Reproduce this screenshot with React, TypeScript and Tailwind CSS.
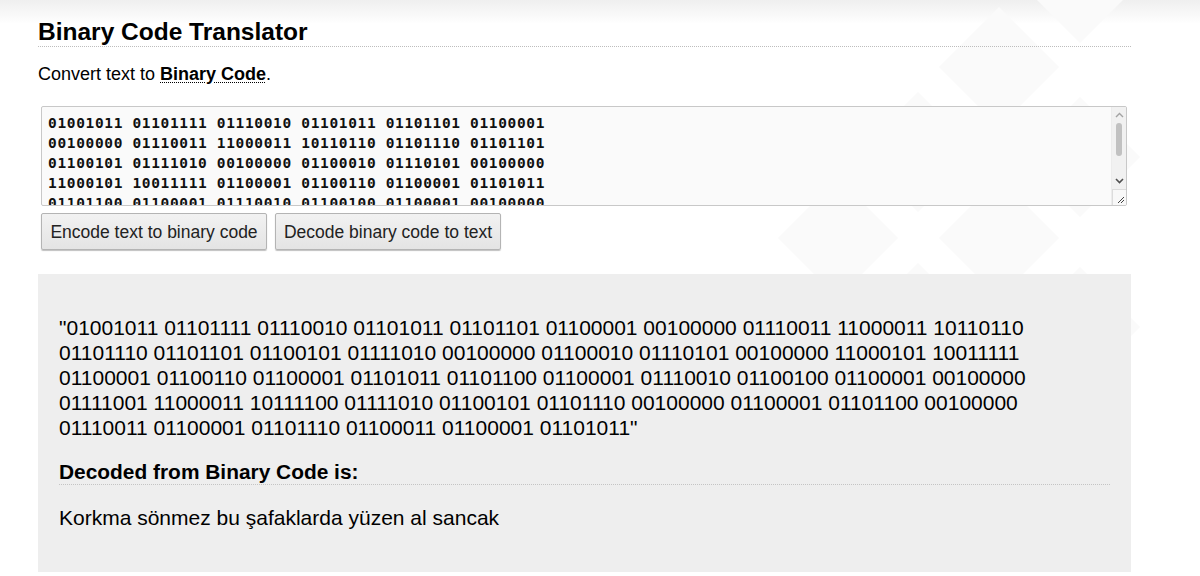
import React from "react";

const taLines = [
  "01001011 01101111 01110010 01101011 01101101 01100001",
  "00100000 01110011 11000011 10110110 01101110 01101101",
  "01100101 01111010 00100000 01100010 01110101 00100000",
  "11000101 10011111 01100001 01100110 01100001 01101011",
  "01101100 01100001 01110010 01100100 01100001 00100000",
];

const outLines = [
  "\"01001011 01101111 01110010 01101011 01101101 01100001 00100000 01110011 11000011 10110110",
  "01101110 01101101 01100101 01111010 00100000 01100010 01110101 00100000 11000101 10011111",
  "01100001 01100110 01100001 01101011 01101100 01100001 01110010 01100100 01100001 00100000",
  "01111001 11000011 10111100 01111010 01100101 01101110 00100000 01100001 01101100 00100000",
  "01110011 01100001 01101110 01100011 01100001 01101011\"",
];

const diamonds: [number, number][] = [
  [1080, -17],
  [999, 67],
  [918, 152],
  [1080, 157],
  [838, 238],
  [999, 238],
  [918, 323],
  [1080, 327],
];

function Background() {
  return (
    <svg
      className="pointer-events-none absolute left-0 top-0"
      width="1200"
      height="576"
      viewBox="0 0 1200 576"
    >
      {diamonds.map(([cx, cy], i) => (
        <polygon
          key={i}
          points={`${cx},${cy - 60} ${cx + 60},${cy} ${cx},${cy + 60} ${cx - 60},${cy}`}
          fill="#fafafa"
        />
      ))}
    </svg>
  );
}

function Scrollbar() {
  return (
    <div className="flex w-[15px] shrink-0 flex-col border-l border-[#ececec] bg-[#f1f1f1]">
      <div className="flex h-[16px] items-center justify-center">
        <svg width="9" height="6" viewBox="0 0 9 6">
          <path d="M1 5 L4.5 1.5 L8 5" stroke="#a3a3a3" strokeWidth="1.4" fill="none" />
        </svg>
      </div>
      <div className="flex justify-center">
        <div className="h-[33px] w-[6px] rounded-[3px] bg-[#c1c1c1]" />
      </div>
      <div className="flex-1" />
      <div className="flex h-[16px] items-center justify-center">
        <svg width="9" height="6" viewBox="0 0 9 6">
          <path d="M1 1 L4.5 4.5 L8 1" stroke="#505050" strokeWidth="1.6" fill="none" />
        </svg>
      </div>
      <div className="flex h-[16px] items-end justify-end border-t border-l border-[#dcdcdc] bg-[#f8f8f8] pb-[1px] pr-[1px]">
        <svg width="9" height="9" viewBox="0 0 9 9">
          <path d="M2 8 L8 2 M5 8 L8 5" stroke="#444" strokeWidth="1" fill="none" />
        </svg>
      </div>
    </div>
  );
}

export default function App() {
  return (
    <div className="relative h-[576px] w-[1200px] overflow-hidden bg-white bg-[linear-gradient(to_bottom,#efefef_0px,#ffffff_24px)] font-['Liberation_Sans',Arial,sans-serif] text-black">
      <Background />
      <div className="relative ml-[38px] w-[1093px] pt-[18px]">
        <h1 className="border-b border-dotted border-[#bdbdbd] text-[24.5px] font-bold leading-[28px]">
          Binary Code Translator
        </h1>
        <p className="mt-[17px] text-[18px] leading-[21px]">
          Convert text to{" "}
          <abbr className="font-bold underline decoration-dotted decoration-1 underline-offset-2">
            Binary Code
          </abbr>
          .
        </p>

        <div className="ml-[3px] mt-[21px] flex h-[100px] w-[1086px] overflow-hidden rounded-[2px] border border-[#c8c8c8] bg-[#fafafa]">
          <div className="h-[98px] flex-1 overflow-hidden pl-[6px] pt-[6px] font-['DejaVu_Sans_Mono',monospace] text-[14.5px] font-bold leading-[20px] tracking-[0.65px] text-[#111]">
            {taLines.map((l, i) => (
              <div key={i} className="whitespace-pre">
                {l}
              </div>
            ))}
          </div>
          <Scrollbar />
        </div>

        <div className="ml-[3px] mt-[7px] flex gap-[8px]">
          <button className="h-[37px] w-[226px] rounded-[2px] border border-[#b4b4b4] bg-[linear-gradient(to_bottom,#f2f2f2,#e4e4e4)] text-[17.5px] leading-[20px] text-[#222] shadow-[0_1px_1px_rgba(0,0,0,0.25)]">
            Encode text to binary code
          </button>
          <button className="h-[37px] w-[226px] rounded-[2px] border border-[#b4b4b4] bg-[linear-gradient(to_bottom,#f2f2f2,#e4e4e4)] text-[17.5px] leading-[20px] text-[#222] shadow-[0_1px_1px_rgba(0,0,0,0.25)]">
            Decode binary code to text
          </button>
        </div>

        <div className="mt-[24px] h-[298px] bg-[#eeeeee] px-[21px] pt-[41px]">
          <div className="text-[21px] leading-[25px]">
            {outLines.map((l, i) => (
              <div key={i} className="whitespace-pre">
                {l}
              </div>
            ))}
          </div>
          <h3 className="mt-[20px] border-b border-dotted border-[#c4c4c4] text-[20.9px] font-bold leading-[24px]">
            Decoded from Binary Code is:
          </h3>
          <p className="mt-[21px] text-[21px] leading-[24px]">
            Korkma sönmez bu şafaklarda yüzen al sancak
          </p>
        </div>
      </div>
    </div>
  );
}
